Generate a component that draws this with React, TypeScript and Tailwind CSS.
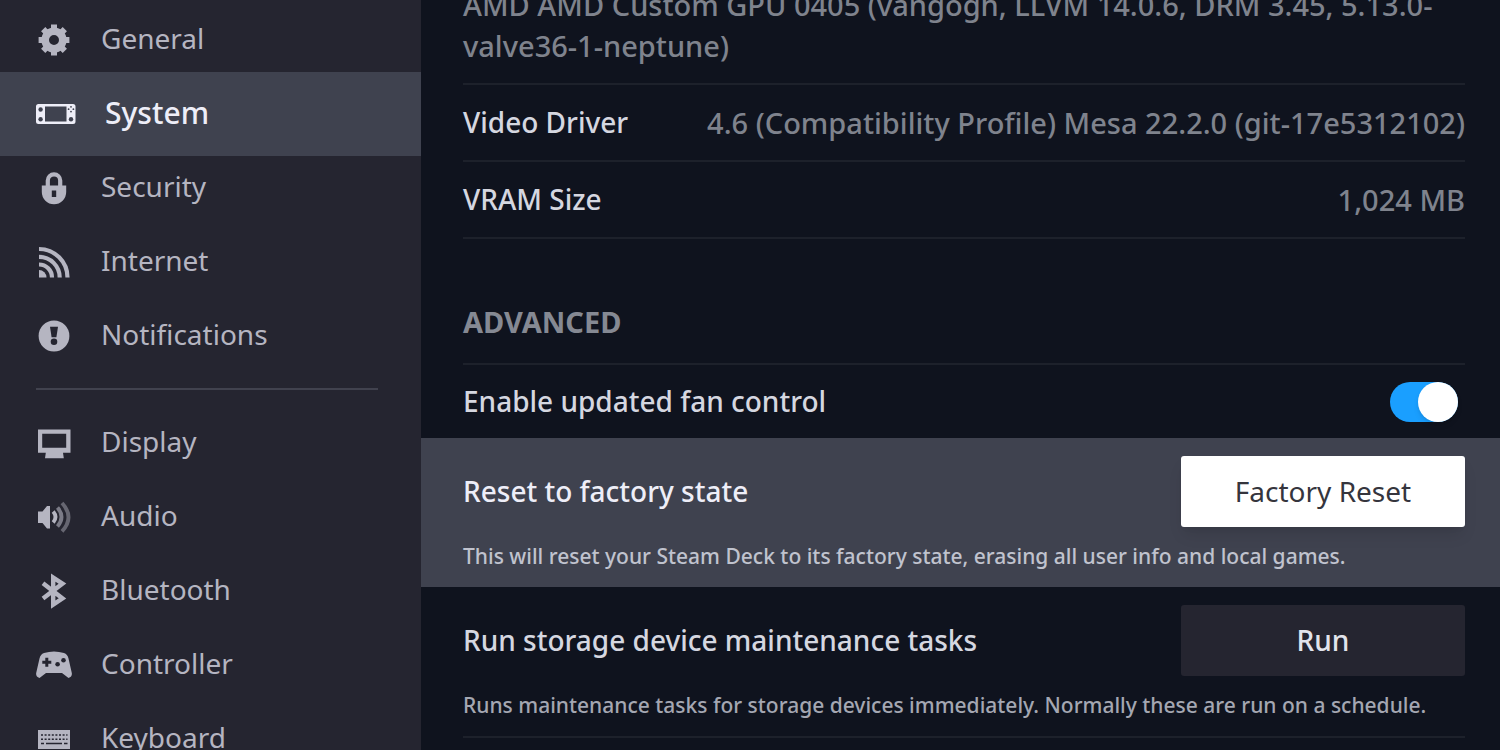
import { useState } from "react"
import type { ReactNode } from "react"

const GearIcon = () => (
    <svg width="36" height="36" viewBox="0 0 36 36" fill="none" stroke="currentColor" aria-hidden="true">
        <circle cx="18" cy="18" r="8.8" strokeWidth="7.6" />
        <g strokeWidth="6">
            <path d="M18 2.6V8M18 28v5.4M2.6 18H8M28 18h5.4" />
            <path d="M7.2 7.2l3.6 3.6M25.2 25.2l3.6 3.6M28.8 7.2l-3.6 3.6M10.8 25.2l-3.6 3.6" />
        </g>
    </svg>
)

const DeckIcon = () => (
    <svg width="40" height="36" viewBox="0 0 40 36" aria-hidden="true">
        <path fill="currentColor" fillRule="evenodd" d="M2.500 8h34.500a2.500 2.500 0 0 1 2.500 2.500v15a2.500 2.500 0 0 1-2.500 2.500h-34.500A2.500 2.500 0 0 1 0 25.500v-15A2.500 2.500 0 0 1 2.500 8zM9 10.500v15h21.500v-15z" />
        <g fill="#3f424f">
            <circle cx="4.600" cy="13.500" r="2.200" />
            <circle cx="4.600" cy="23.200" r="2.200" />
            <circle cx="35" cy="23.200" r="2.200" />
            <circle cx="35" cy="10.800" r=".9" />
            <circle cx="35" cy="15.600" r=".9" />
            <circle cx="32.600" cy="13.200" r=".9" />
            <circle cx="37.400" cy="13.200" r=".9" />
        </g>
    </svg>
)

const LockIcon = () => (
    <svg width="36" height="36" viewBox="0 0 36 36" aria-hidden="true">
        <path fill="none" stroke="currentColor" strokeWidth="4.200" d="M11.800 17v-6.500a6.200 6.200 0 0 1 12.400 0V17" />
        <path fill="currentColor" fillRule="evenodd" d="M5.800 15.500h24.400v6.500a12.200 12.200 0 0 1-24.400 0zM15.800 20.500v6.500h4.400v-6.500z" />
    </svg>
)

const InternetIcon = () => (
    <svg width="36" height="36" viewBox="0 0 36 36" fill="none" stroke="currentColor" strokeWidth="4.200" aria-hidden="true">
        <path fill="currentColor" stroke="none" d="M3 26a7.500 7.500 0 0 1 7.500 7.500H3z" />
        <path d="M3 20.500a13 13 0 0 1 13 13M3 12.800a20.700 20.700 0 0 1 20.700 20.700M3 5a28.500 28.500 0 0 1 28.500 28.500" />
    </svg>
)

const AlertIcon = () => (
    <svg width="36" height="36" viewBox="0 0 36 36" aria-hidden="true">
        <circle cx="18" cy="18" r="15.400" fill="currentColor" />
        <g fill="#252530">
            <path d="M14 8.800h8l-1.600 10.400h-4.800z" />
            <circle cx="18" cy="23.800" r="3.300" />
        </g>
    </svg>
)

const DisplayIcon = () => (
    <svg width="36" height="36" viewBox="0 0 36 36" aria-hidden="true">
        <path fill="currentColor" fillRule="evenodd" d="M2 4.500h32.500v23.200H27l.8 5.500H9l.8-5.500H2zM6.200 8.700v14h24v-14z" />
    </svg>
)

const AudioIcon = () => (
    <svg width="36" height="36" viewBox="0 0 36 36" fill="none" stroke="currentColor" strokeWidth="3.800" aria-hidden="true">
        <path fill="currentColor" stroke="none" d="M2 12.500h4.500L11 7h3v22.500h-3L6.500 24H2z" />
        <path d="M17.200 12.500q4.600 5.500 0 11" />
        <path opacity=".6" d="M21.500 8.500q8 9.500 0 19" />
        <path opacity=".45" d="M26 4q13 14.200 0 28.400" />
    </svg>
)

const BluetoothIcon = () => (
    <svg width="36" height="36" viewBox="0 0 36 36" fill="none" stroke="currentColor" strokeWidth="4.400" aria-hidden="true">
        <path d="M7 10.200l19.500 15.200-9.300 6.200V4.600l9.300 6L7 25.600" />
    </svg>
)

const ControllerIcon = () => (
    <svg width="36" height="36" viewBox="0 0 36 36" aria-hidden="true">
        <path fill="currentColor" d="M8 6Q18 3 28 6q3.500 1 4.500 5.500l3.300 14.500q.6 3.500-3.300 5l-6.500-5h-16L3.500 31Q-.4 29.500.2 26L3.500 11.500Q4.500 7 8 6z" />
        <g fill="#252530">
            <path d="M9.300 10.800h3v3h3v3h-3v3h-3v-3h-3v-3h3z" />
            <circle cx="21.600" cy="17.200" r="2.300" />
            <circle cx="27.500" cy="13.200" r="2.300" />
        </g>
    </svg>
)

const KeyboardIcon = () => (
    <svg width="36" height="36" viewBox="0 0 36 36" aria-hidden="true">
        <path fill="currentColor" d="M2 9h32v19H2z" />
        <g fill="none" stroke="#252530" strokeWidth="1.500">
            <path strokeDasharray="2 1.600" d="M5 14h26.500M5 18.300h26.500" />
            <path d="M5 22.600h3M10 22.600h16M28 22.600h3.500" />
        </g>
    </svg>
)

const mainItems = [
    { name: "General", icon: <GearIcon /> },
    { name: "System", icon: <DeckIcon /> },
    { name: "Security", icon: <LockIcon /> },
    { name: "Internet", icon: <InternetIcon /> },
    { name: "Notifications", icon: <AlertIcon /> },
]

const deviceItems = [
    { name: "Display", icon: <DisplayIcon /> },
    { name: "Audio", icon: <AudioIcon /> },
    { name: "Bluetooth", icon: <BluetoothIcon /> },
    { name: "Controller", icon: <ControllerIcon /> },
    { name: "Keyboard", icon: <KeyboardIcon /> },
]

const NavItem = ({ name, icon }: { name: string, icon: ReactNode }) => {

    const active = name === "System"

    return (
        <a
            href={"#" + name.toLowerCase()}
            aria-current={active ? "page" : undefined}
            className={active
                ? "-my-[5px] flex h-[84px] shrink-0 items-center gap-[29px] bg-[#3f424f] px-9 text-[30px] font-medium text-[#eeeef8]"
                : "flex h-[74px] shrink-0 items-center gap-[29px] px-9 text-[#b5b5c1]"}
        >
            {icon}
            <span className="pb-[3px]">{name}</span>
        </a>
    )
}

const Divider = () => <hr className="h-[2px] border-0 bg-[#1d212b]" />

const InfoRow = ({ label, value }: { label: string, value: string }) => (
    <div className="flex h-[75px] items-center justify-between gap-6">
        <dt className="font-medium text-[#d5d7e0]">{label}</dt>
        <dd className="text-right text-[29px] font-medium text-[#7f838d]">{value}</dd>
    </div>
)

export default function App() {

    const [fanControl, setFanControl] = useState(true)

    return (
        <div className="flex h-screen overflow-hidden bg-[#0f131e] font-['Noto_Sans',sans-serif] text-[28px] leading-[41px]">
            <nav className="flex w-[421px] shrink-0 flex-col overflow-hidden bg-[#252530] pt-[3px]">
                {mainItems.map((item) => <NavItem key={item.name} {...item} />)}
                <hr className="mt-[15px] mr-[43px] mb-4 ml-9 h-[2px] shrink-0 border-0 bg-[#41424e]" />
                {deviceItems.map((item) => <NavItem key={item.name} {...item} />)}
            </nav>

            <main className="min-w-0 flex-1 overflow-hidden">
                <section className="-mt-4 pr-[35px] pl-[42px]">
                    <p className="pb-[17px] text-[29px] font-medium text-[#7f838d]">
                        AMD AMD Custom GPU 0405 (vangogh, LLVM 14.0.6, DRM 3.45, 5.13.0-valve36-1-neptune)
                    </p>
                    <Divider />
                    <dl>
                        <InfoRow label="Video Driver" value="4.6 (Compatibility Profile) Mesa 22.2.0 (git-17e5312102)" />
                        <Divider />
                        <InfoRow label="VRAM Size" value="1,024 MB" />
                    </dl>
                    <Divider />
                </section>

                <section className="pt-[62px]">
                    <div className="pr-[35px] pl-[42px]">
                        <h2 className="pb-[21px] text-[29px] font-bold text-[#858993]">ADVANCED</h2>
                        <Divider />
                        <div className="flex h-[73px] items-center justify-between pr-[7px]">
                            <label htmlFor="fan" className="font-medium text-[#d5d7e0]">Enable updated fan control</label>
                            <input
                                id="fan"
                                type="checkbox"
                                role="switch"
                                checked={fanControl}
                                onChange={(e) => setFanControl(e.target.checked)}
                                className="flex h-10 w-[68px] cursor-pointer appearance-none rounded-full bg-[#3d4450] before:h-10 before:w-10 before:rounded-full before:bg-white before:shadow-md checked:justify-end checked:bg-[#1a9fff]"
                            />
                        </div>
                    </div>

                    <div className="h-[149px] bg-[#3f424f] pt-[18px] pr-[35px] pl-[42px]">
                        <div className="flex items-center justify-between">
                            <h3 className="font-medium text-[#eeeef8]">Reset to factory state</h3>
                            <button className="h-[71px] w-[284px] rounded-[3px] bg-white text-[#35353d] shadow-lg">Factory Reset</button>
                        </div>
                        <p className="pt-[14px] text-[21px] leading-[30px] font-medium text-[#c0c3ce]">
                            This will reset your Steam Deck to its factory state, erasing all user info and local games.
                        </p>
                    </div>

                    <div className="pt-[18px] pr-[35px] pl-[42px]">
                        <div className="flex items-center justify-between">
                            <h3 className="font-medium text-[#d5d7e0]">Run storage device maintenance tasks</h3>
                            <button className="h-[71px] w-[284px] rounded-[3px] bg-[#252530] font-medium text-[#e2e4ec]">Run</button>
                        </div>
                        <p className="pt-[14px] pb-4 text-[21px] leading-[30px] font-medium text-[#a4a7b2]">
                            Runs maintenance tasks for storage devices immediately. Normally these are run on a schedule.
                        </p>
                        <Divider />
                    </div>
                </section>
            </main>
        </div>
    )
}
